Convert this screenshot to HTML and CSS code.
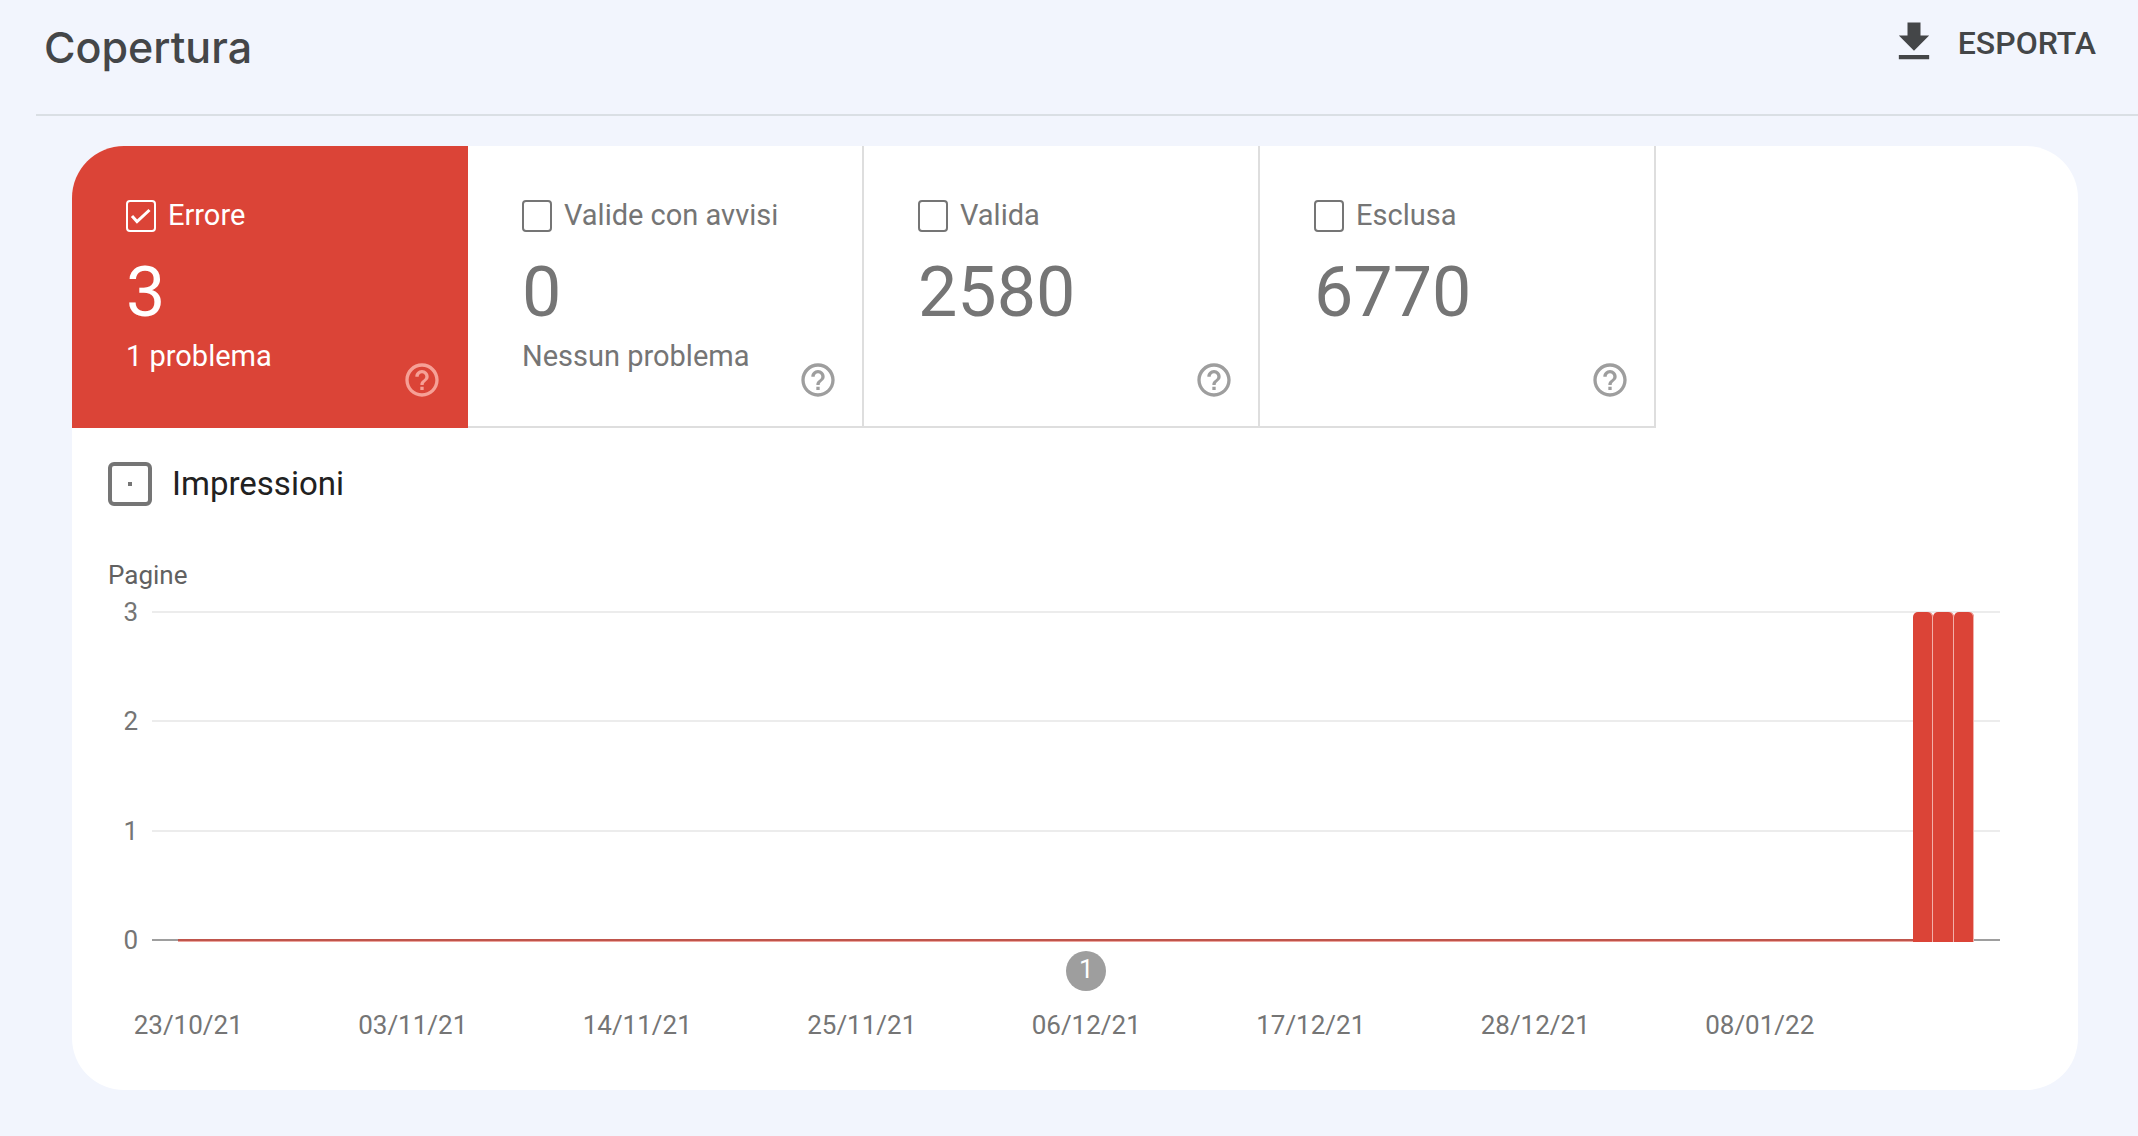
FILE: index.html
```html
<!DOCTYPE html>
<html lang="it">
<head>
<meta charset="utf-8">
<meta name="viewport" content="width=device-width, initial-scale=1">
<title>Copertura</title>
<link rel="stylesheet" href="styles.css">
</head>
<body>
<svg class="defs" aria-hidden="true">
  <symbol id="help" viewBox="0 0 24 24"><path d="M11 18h2v-2h-2v2zm1-16C6.480 2 2 6.480 2 12s4.480 10 10 10 10-4.480 10-10S17.520 2 12 2zm0 18c-4.410 0-8-3.590-8-8s3.590-8 8-8 8 3.590 8 8-3.590 8-8 8zm0-14c-2.210 0-4 1.790-4 4h2c0-1.100.9-2 2-2s2 .9 2 2c0 2-3 1.750-3 5h2c0-2.250 3-2.500 3-5 0-2.210-1.790-4-4-4z"/></symbol>
</svg>
<header class="header">
  <h1 class="title">Copertura</h1>
  <button class="export" type="button">
    <svg class="export-icon" viewBox="0 0 24 24" aria-hidden="true"><path d="M19 9h-4V3H9v6H5l7 7 7-7zM5 18v2h14v-2H5z"/></svg>
    ESPORTA
  </button>
</header>
<main class="card">
  <section class="tiles">
    <div class="tile tile-error">
      <label class="tile-label"><input class="check" type="checkbox" checked>Errore</label>
      <div class="tile-value">3</div>
      <div class="tile-note">1 problema</div>
      <button class="help" type="button" aria-label="Guida"><svg class="help-icon"><use href="#help"/></svg></button>
    </div>
    <div class="tile">
      <label class="tile-label"><input class="check" type="checkbox">Valide con avvisi</label>
      <div class="tile-value">0</div>
      <div class="tile-note">Nessun problema</div>
      <button class="help" type="button" aria-label="Guida"><svg class="help-icon"><use href="#help"/></svg></button>
    </div>
    <div class="tile">
      <label class="tile-label"><input class="check" type="checkbox">Valida</label>
      <div class="tile-value">2580</div>
      <button class="help" type="button" aria-label="Guida"><svg class="help-icon"><use href="#help"/></svg></button>
    </div>
    <div class="tile">
      <label class="tile-label"><input class="check" type="checkbox">Esclusa</label>
      <div class="tile-value">6770</div>
      <button class="help" type="button" aria-label="Guida"><svg class="help-icon"><use href="#help"/></svg></button>
    </div>
  </section>
  <label class="impressions"><input class="impressions-check" type="checkbox">Impressioni</label>
  <section class="chart">
    <div class="axis-title">Pagine</div>
    <div class="chart-body">
      <div class="y-axis"><span>3</span><span>2</span><span>1</span><span>0</span></div>
      <div class="plot">
        <div class="gridlines"><div class="gridline"></div><div class="gridline"></div><div class="gridline"></div></div>
        <div class="series">
          <div class="zero-days"></div>
          <div class="bar"></div>
          <div class="bar"></div>
          <div class="bar"></div>
        </div>
      </div>
    </div>
  </section>
  <div class="x-axis">
    <button class="marker" type="button">1</button>
    <span class="date">23/10/21</span>
    <span class="date">03/11/21</span>
    <span class="date">14/11/21</span>
    <span class="date">25/11/21</span>
    <span class="date">06/12/21</span>
    <span class="date">17/12/21</span>
    <span class="date">28/12/21</span>
    <span class="date">08/01/22</span>
  </div>
</main>
</body>
</html>
```
FILE: styles.css
```css
* {
  box-sizing: border-box;
}

body {
  margin: 0;
  background: #f2f5fd;
  color: #757575;
  font-family: Roboto, "Liberation Sans", sans-serif;
}

button {
  margin: 0;
  padding: 0;
  border: 0;
  background: none;
  font-family: inherit;
  cursor: pointer;
}

.defs {
  display: none;
}

.header {
  display: flex;
  justify-content: space-between;
  align-items: flex-start;
  height: 116px;
  margin-left: 36px;
  padding: 16px 42px 0 8px;
  border-bottom: 2px solid #dadfe4;
}

.title {
  margin: 0;
  color: #444648;
  font-family: Inter, sans-serif;
  font-size: 43px;
  font-weight: 500;
  line-height: 62px;
}

.export {
  display: flex;
  align-items: flex-start;
  gap: 18px;
  color: #444648;
  font-size: 32px;
  font-weight: 500;
  line-height: 54px;
}

.export-icon {
  width: 52px;
  height: 52px;
  fill: currentColor;
}

.card {
  margin: 30px 60px 46px 72px;
  padding-bottom: 50px;
  overflow: hidden;
  border-radius: 52px;
  background: #fff;
}

.tiles {
  display: flex;
}

.tile {
  position: relative;
  flex: 0 1 396px;
  min-height: 282px;
  padding: 53px 0 0 54px;
  border: solid #dedede;
  border-width: 0 2px 2px 0;
}

.tile-error {
  border-color: #db4437;
  background: #db4437;
  color: #fff;
}

.tile-label {
  display: flex;
  gap: 12px;
  font-size: 29px;
  line-height: 32px;
}

.check {
  width: 30px;
  height: 32px;
  margin: 1px 0 0;
  border: 2px solid #757575;
  border-radius: 4px;
  appearance: none;
}

.check:checked {
  border-color: #fff;
  background: url("data:image/svg+xml,%3Csvg xmlns='http://www.w3.org/2000/svg' viewBox='0 0 26 28'%3E%3Cpath d='M4 14l5 5.500L21.500 8' fill='none' stroke='white' stroke-width='3'/%3E%3C/svg%3E") center / 26px 28px no-repeat;
}

.tile-value {
  margin-top: 18px;
  font-size: 70px;
  line-height: 84px;
}

.tile-note {
  margin-top: 6px;
  font-size: 29px;
  line-height: 32px;
}

.help {
  position: absolute;
  right: 24px;
  bottom: 26px;
  width: 40px;
  height: 40px;
  color: #9e9e9e;
}

.tile-error .help {
  color: #f6a096;
}

.help-icon {
  display: block;
  width: 40px;
  height: 40px;
  fill: currentColor;
}

.impressions {
  display: flex;
  align-items: center;
  gap: 20px;
  margin: 34px 36px 54px;
  color: #212121;
  font-size: 33px;
  line-height: 44px;
}

.impressions-check {
  width: 44px;
  height: 44px;
  margin: 0;
  border: 4px solid #757575;
  border-radius: 6px;
  background: linear-gradient(#757575, #757575) center / 4px 4px no-repeat;
  appearance: none;
}

.chart {
  padding: 0 78px 0 36px;
  font-size: 26px;
  line-height: 30px;
}

.axis-title {
  color: #616161;
}

.chart-body {
  display: flex;
  gap: 14px;
  margin-top: 21px;
}

.y-axis {
  display: flex;
  flex-direction: column;
  justify-content: space-between;
  width: 30px;
  margin: -14px 0;
  text-align: right;
}

.plot {
  display: grid;
  flex: 1;
  height: 330px;
}

.gridlines,
.series {
  grid-area: 1 / 1;
}

.gridlines {
  display: grid;
  grid-template-rows: repeat(3, 1fr);
  border-bottom: 2px solid #9e9e9e;
}

.gridline {
  border-top: 2px solid #ececec;
}

.series {
  display: flex;
  align-items: flex-end;
  margin: 1px 26px -1px;
}

.zero-days {
  flex: 85;
  height: 3px;
  background: linear-gradient(#bf554c 2px, #eda59e 2px);
}

.bar {
  flex: 1;
  height: 100%;
  border-radius: 5px 5px 0 0;
  background: #db4437;
  box-shadow: inset -1px 0 #f2b0a9;
}

.x-axis {
  display: grid;
  grid-template-columns: repeat(8, 1fr);
  row-gap: 19px;
  margin-top: 10px;
  padding: 0 206px 0 4px;
  font-size: 26px;
  line-height: 30px;
  text-align: center;
}

.marker {
  grid-area: 1 / 5;
  justify-self: center;
  width: 40px;
  height: 40px;
  padding-bottom: 4px;
  border-radius: 50%;
  background: #9e9e9e;
  color: #fff;
  font-size: 26px;
  line-height: 36px;
}

.date {
  grid-row: 2;
}
```
